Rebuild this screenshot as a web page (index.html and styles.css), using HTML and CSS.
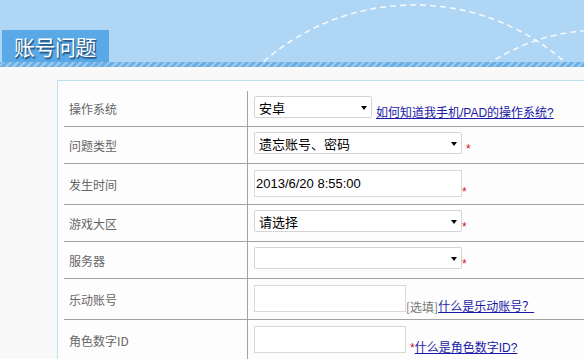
FILE: index.html
```html
<!DOCTYPE html>
<html lang="zh-CN">
<head>
    <meta charset="UTF-8">
    <title>账号问题</title>
    <link rel="stylesheet" href="styles.css">
</head>
<body>
    <div class="page">
        <!-- Header -->
        <div class="header">
            <svg class="header-arcs" width="584" height="62" viewBox="0 0 584 62">
                <circle cx="414" cy="233" r="228" fill="none" stroke="#fff" stroke-width="1.6" stroke-dasharray="6 4" opacity="0.85"></circle>
                <circle cx="601" cy="234" r="204" fill="none" stroke="#fff" stroke-width="1.6" stroke-dasharray="6 4" opacity="0.85"></circle>
            </svg>
            <div class="tab">账号问题</div>
        </div>
        <div class="stripe"></div>

        <!-- Form panel -->
        <div class="panel">
            <div class="row">
                <div class="label">操作系统</div>
                <div class="value">
                    <span class="select-wrap short">
                        <select><option>安卓</option></select>
                    </span>
                    <a href="#" class="note link gap">如何知道我手机/PAD的操作系统?</a>
                </div>
            </div>
            <div class="row">
                <div class="label">问题类型</div>
                <div class="value">
                    <span class="select-wrap">
                        <select><option>遗忘账号、密码</option></select>
                    </span>
                    <span class="note req gap">*</span>
                </div>
            </div>
            <div class="row tall">
                <div class="label">发生时间</div>
                <div class="value">
                    <input type="text" class="text wide" value="2013/6/20 8:55:00">
                    <span class="note req">*</span>
                </div>
            </div>
            <div class="row">
                <div class="label">游戏大区</div>
                <div class="value">
                    <span class="select-wrap">
                        <select><option>请选择</option></select>
                    </span>
                    <span class="note req">*</span>
                </div>
            </div>
            <div class="row">
                <div class="label">服务器</div>
                <div class="value">
                    <span class="select-wrap">
                        <select><option></option></select>
                    </span>
                    <span class="note req">*</span>
                </div>
            </div>
            <div class="row tall">
                <div class="label">乐动账号</div>
                <div class="value">
                    <input type="text" class="text">
                    <span class="note hint">[选填]</span><a href="#" class="note link">什么是乐动账号？</a>
                </div>
            </div>
            <div class="row tall">
                <div class="label">角色数字ID</div>
                <div class="value">
                    <input type="text" class="text">
                    <span class="note req gap">*</span><a href="#" class="note link">什么是角色数字ID?</a>
                </div>
            </div>
        </div>
    </div>
</body>
</html>
```

FILE: styles.css
```css
* {
    margin: 0;
    padding: 0;
    box-sizing: border-box;
}

html,
body {
    overflow: hidden;
}

body {
    font-family: "Liberation Sans", "Noto Sans CJK SC", sans-serif;
    font-size: 12px;
    background-color: #f9f9f9;
    color: #000;
}

.page {
    width: 584px;
    height: 359px;
    overflow: hidden;
}

/* Header */
.header {
    position: relative;
    height: 62px;
    background-color: #b0d6f5;
    display: flex;
    align-items: flex-end;
    padding-left: 2px;
}

.header-arcs {
    position: absolute;
    top: 0;
    left: 0;
}

.tab {
    position: relative;
    width: 107px;
    height: 32px;
    background-color: #59a9e6;
    color: #fff;
    font-family: "Noto Sans CJK SC", sans-serif;
    font-size: 21px;
    line-height: 32px;
    padding-left: 12px;
    letter-spacing: -0.5px;
    text-shadow: 1px 1px 0 #2a5f8f, 1px 2px 1px #2a5f8f;
}

.stripe {
    height: 5px;
    background: repeating-linear-gradient(-45deg, #6cb0e6 0, #6cb0e6 3px, #9dcbf0 3px, #9dcbf0 5px);
}

/* Panel */
.panel {
    margin: 13px 0 0 57px;
    width: 560px;
    min-height: 300px;
    background-color: #fdfdfd;
    border: 1px solid #c0def2;
    padding: 10px 0 0 6px;
}

.row {
    display: flex;
    height: 37px;
    border-bottom: 1px solid #a3a3a3;
}

.row:first-child {
    height: 36px;
}

.row.tall {
    height: 41px;
}

.label {
    width: 184px;
    border-right: 1px solid #a3a3a3;
    display: flex;
    align-items: center;
    padding-left: 5px;
    color: #666;
    font-family: "Noto Sans CJK SC", sans-serif;
    font-size: 12px;
}

.value {
    flex: 1;
    display: flex;
    align-items: flex-end;
    align-self: flex-start;
    padding: 5px 0 0 6px;
}

.row.tall .value {
    padding-top: 6px;
}

/* Controls */
.select-wrap {
    position: relative;
    display: block;
    width: 208px;
    height: 22px;
}

.select-wrap.short {
    width: 118px;
}

.select-wrap::after {
    content: "";
    position: absolute;
    right: 5px;
    top: 10px;
    border-left: 3.5px solid transparent;
    border-right: 3.5px solid transparent;
    border-top: 4px solid #000;
}

select {
    appearance: none;
    -webkit-appearance: none;
    width: 100%;
    height: 22px;
    border: 1px solid #d4d4d4;
    border-radius: 2px;
    background-color: #fff;
    padding: 0 4px;
    font-family: "Noto Sans CJK SC", sans-serif;
    font-size: 13px;
    color: #000;
    outline: none;
}

.text {
    width: 152px;
    height: 27px;
    border: 1px solid #d9d9d9;
    background-color: #fff;
    padding: 0 1px;
    font-family: "Liberation Sans", "Noto Sans CJK SC", sans-serif;
    font-size: 13px;
    color: #000;
    outline: none;
}

.text.wide {
    width: 208px;
}

.note {
    line-height: 14px;
    margin-bottom: -2px;
    white-space: nowrap;
}

.gap {
    margin-left: 4px;
}

.req {
    color: #d0141d;
    font-size: 12px;
}

.hint {
    color: #777;
    font-family: "Noto Sans CJK SC", sans-serif;
}

.link {
    color: #1a1aa8;
    text-decoration: underline;
}
```
